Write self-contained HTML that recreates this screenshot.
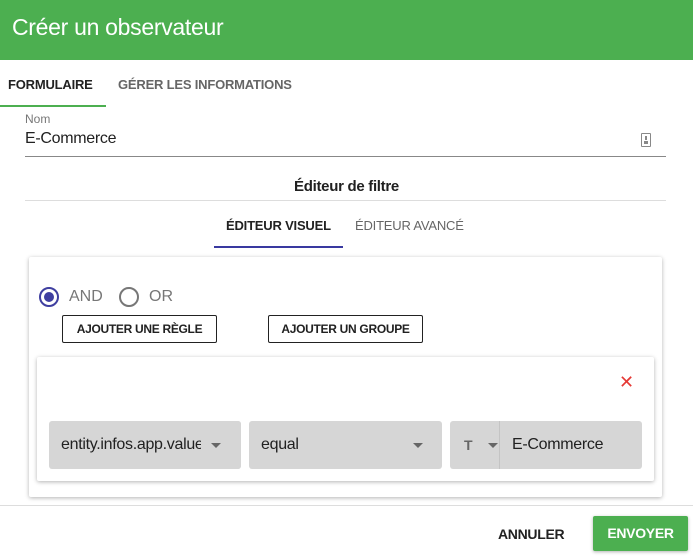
<!DOCTYPE html>
<html><head><meta charset="utf-8"><style>
*{box-sizing:border-box;margin:0;padding:0}
body{width:693px;height:558px;overflow:hidden;background:#fff;font-family:"Liberation Sans",sans-serif;position:relative;color:#212121}
.a{position:absolute;white-space:nowrap}
.hdr{left:0;top:0;width:693px;height:60px;background:#4caf50}
.title{left:12px;top:14px;font-size:23px;color:#fff;letter-spacing:-0.3px}
.tab{font-size:13px;font-weight:bold;letter-spacing:-0.2px}
.card{background:#fff;box-shadow:0 1px 4px rgba(0,0,0,.3);border-radius:2px}
.btn{border:1px solid #222;border-radius:2px;font-size:12px;font-weight:bold;text-align:center;line-height:26px;letter-spacing:-0.3px}
.sel{background:#d6d6d6;border-radius:3px;height:48px;top:421px;font-size:16px;line-height:48px;letter-spacing:-0.3px}
.tri{position:absolute;width:0;height:0;border-left:5px solid transparent;border-right:5px solid transparent;border-top:5px solid #666;top:22px}
</style></head><body>
<div class="a hdr"></div>
<div class="a title">Créer un observateur</div>
<div class="a tab" style="left:8px;top:77px;color:#222">FORMULAIRE</div>
<div class="a tab" style="left:118px;top:77px;color:#666">GÉRER LES INFORMATIONS</div>
<div class="a" style="left:0;top:105px;width:106px;height:2px;background:#4caf50"></div>
<div class="a" style="left:25px;top:112px;font-size:12px;color:#777">Nom</div>
<div class="a" style="left:25px;top:130px;font-size:16px;letter-spacing:-0.3px">E-Commerce</div>
<div class="a" style="left:641px;top:133px;width:10px;height:14px;border:1px solid #888;border-radius:1px"></div>
<div class="a" style="left:645px;top:136px;width:2px;height:4px;background:#888"></div>
<div class="a" style="left:644px;top:141px;width:4px;height:3px;background:#888"></div>
<div class="a" style="left:25px;top:156px;width:641px;height:1px;background:#888"></div>
<div class="a" style="left:0;width:693px;top:178px;text-align:center;font-size:15px;font-weight:bold;letter-spacing:-0.3px">Éditeur de filtre</div>
<div class="a" style="left:25px;top:200px;width:641px;height:1px;background:#ddd"></div>
<div class="a tab" style="left:226px;top:218px;color:#222">ÉDITEUR VISUEL</div>
<div class="a tab" style="left:355px;top:218px;color:#666;font-weight:normal">ÉDITEUR AVANCÉ</div>
<div class="a" style="left:214px;top:246px;width:129px;height:2px;background:#3939a0"></div>
<div class="a card" style="left:29px;top:257px;width:633px;height:240px"></div>
<div class="a" style="left:39px;top:287px;width:20px;height:20px;border:2px solid #3f3fa0;border-radius:50%"></div>
<div class="a" style="left:44px;top:292px;width:10px;height:10px;background:#3f3fa0;border-radius:50%"></div>
<div class="a" style="left:69px;top:288px;font-size:16px;color:#777">AND</div>
<div class="a" style="left:119px;top:287px;width:20px;height:20px;border:2px solid #777;border-radius:50%"></div>
<div class="a" style="left:149px;top:288px;font-size:16px;color:#777">OR</div>
<div class="a btn" style="left:62px;top:315px;width:155px;height:28px">AJOUTER UNE RÈGLE</div>
<div class="a btn" style="left:268px;top:315px;width:155px;height:28px">AJOUTER UN GROUPE</div>
<div class="a card" style="left:37px;top:357px;width:617px;height:124px"></div>
<div class="a" style="left:619px;top:372px;font-size:18px;color:#e53935">✕</div>
<div class="a sel" style="left:49px;width:192px;padding-left:12px;overflow:hidden">entity.infos.app.value<span style="position:absolute;left:152px;top:0;width:40px;height:48px;background:#d6d6d6"></span><span class="tri" style="left:162px"></span></div>
<div class="a sel" style="left:249px;width:193px;padding-left:12px">equal<span class="tri" style="left:164px"></span></div>
<div class="a sel" style="left:450px;width:49px;border-radius:3px 0 0 3px;padding-left:14px;color:#666;font-size:14px;font-weight:bold">T<span class="tri" style="left:38px"></span></div>
<div class="a sel" style="left:499px;width:143px;border-left:1px solid #c4c4c4;border-radius:0 3px 3px 0;padding-left:12px">E-Commerce</div>
<div class="a" style="left:0;top:505px;width:693px;height:1px;background:#ddd"></div>
<div class="a" style="left:498px;top:526px;font-size:14px;font-weight:bold;letter-spacing:-0.3px">ANNULER</div>
<div class="a" style="left:593px;top:516px;width:95px;height:35px;background:#4caf50;color:#fff;font-size:14px;font-weight:bold;text-align:center;line-height:35px;border-radius:2px;box-shadow:0 1px 3px rgba(0,0,0,.3);letter-spacing:-0.3px">ENVOYER</div>
</body></html>
